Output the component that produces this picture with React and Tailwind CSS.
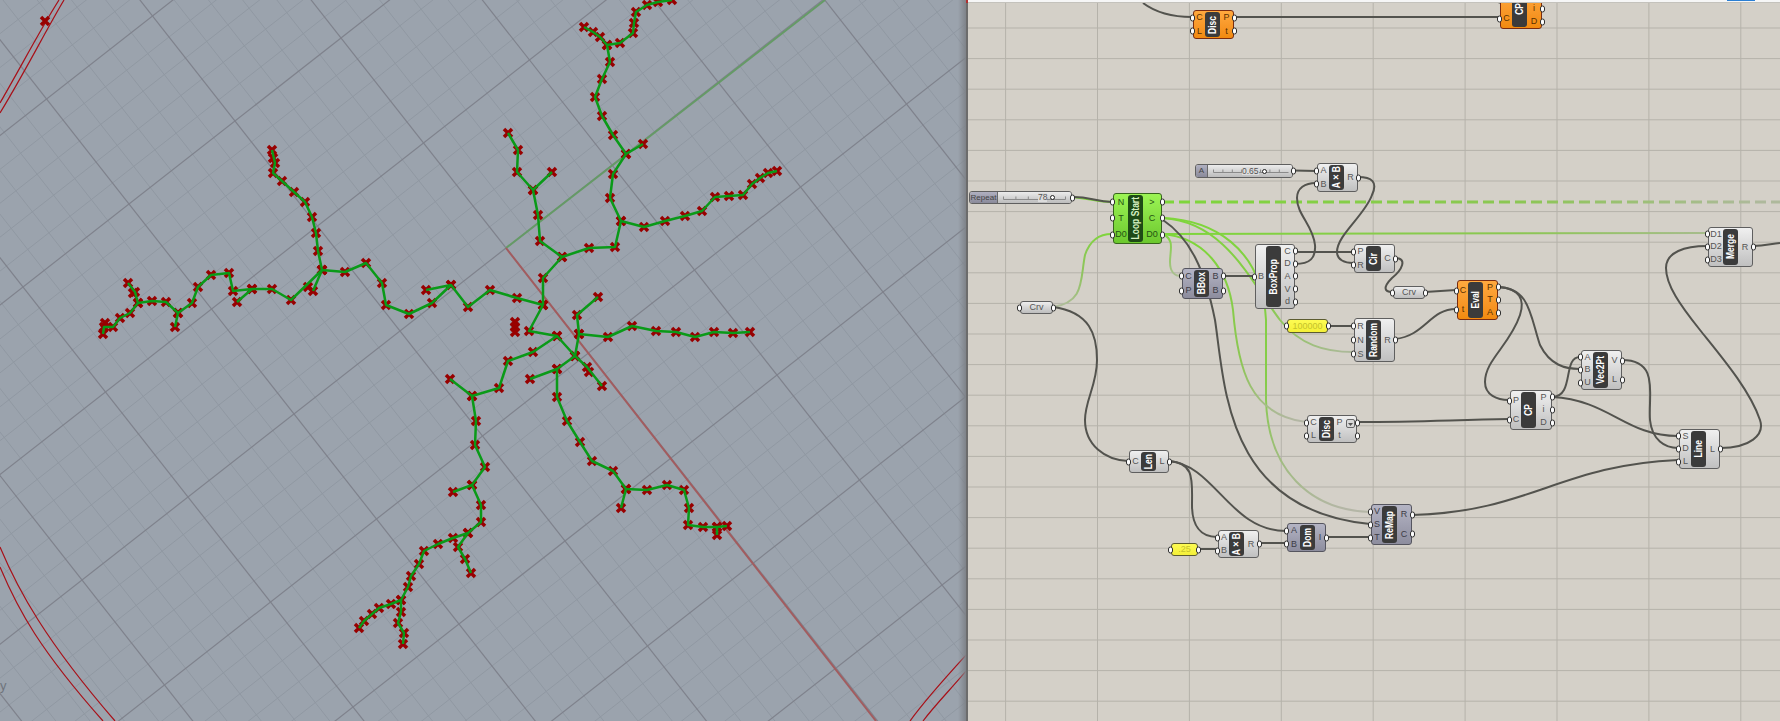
import React from "react";

const CANVAS_X = 968;

// --- Rhino viewport data ---
const O = [506, 248];
const U = [82.5, 105];
const V = [106, -83];
const pt = (a, b) => [O[0] + a * U[0] + b * V[0], O[1] + a * U[1] + b * V[1]];

const gridLines = [];
for (let i = -50; i <= 50; i++) {
	const k = i / 5;
	const major = i % 5 === 0;
	const a1 = pt(k, -12);
	const a2 = pt(k, 12);
	const b1 = pt(-12, k);
	const b2 = pt(12, k);
	gridLines.push({ d: `M${a1[0]} ${a1[1]}L${a2[0]} ${a2[1]}`, major });
	gridLines.push({ d: `M${b1[0]} ${b1[1]}L${b2[0]} ${b2[1]}`, major });
}

const curves = [
	// upper branch
	[[672, 0], [658, 2], [647, 5], [636, 12], [634, 23], [633, 33], [620, 43], [607, 45], [610, 62], [602, 79], [595, 97], [602, 116], [613, 135], [626, 154], [613, 174], [610, 198], [621, 221], [615, 247], [589, 248], [562, 257], [543, 278], [543, 305]],
	[[607, 45], [600, 37], [593, 32], [584, 27]],
	[[626, 154], [643, 144]],
	[[621, 221], [644, 227], [665, 221], [685, 216], [702, 211], [715, 197], [729, 196], [743, 195], [752, 184], [760, 178], [768, 173], [777, 171]],
	[[562, 257], [540, 241], [538, 215], [533, 190], [517, 172], [518, 150], [508, 133]],
	[[533, 190], [552, 172]],
	// left branch
	[[543, 305], [517, 298], [490, 290], [468, 307], [451, 285], [426, 290]],
	[[451, 285], [432, 303], [409, 314], [386, 305], [382, 283], [366, 263], [345, 272], [322, 270]],
	[[322, 270], [318, 251], [316, 233], [312, 217], [305, 202], [294, 192], [282, 181], [273, 173], [275, 163], [272, 150]],
	[[322, 270], [313, 291]],
	[[322, 270], [291, 300], [272, 289], [252, 289], [233, 291], [229, 273], [211, 275], [198, 287], [192, 303], [178, 313], [166, 302], [152, 301], [138, 303], [130, 313], [120, 318], [113, 327], [104, 327], [103, 334]],
	[[252, 289], [237, 302]],
	[[138, 303], [135, 292], [128, 283]],
	[[178, 313], [175, 327]],
	// centre and lower branches
	[[543, 305], [529, 331], [557, 336], [575, 356], [579, 334], [577, 315], [598, 297]],
	[[579, 334], [608, 337], [632, 326], [656, 331], [676, 332], [695, 337], [714, 332], [733, 333], [750, 332]],
	[[575, 356], [587, 367], [602, 386]],
	[[575, 356], [557, 369], [530, 379]],
	[[557, 369], [557, 397], [567, 421], [580, 442], [592, 461], [613, 471], [626, 489], [647, 490], [667, 485], [684, 490], [689, 508], [688, 525], [703, 527], [717, 527], [727, 526]],
	[[626, 489], [621, 508]],
	[[717, 527], [717, 535]],
	[[557, 336], [533, 352], [508, 361], [499, 388], [472, 396], [476, 421], [475, 445], [485, 467], [472, 485], [481, 505], [481, 522], [468, 533], [453, 538], [438, 544], [424, 551], [419, 564], [411, 576], [408, 587], [401, 600], [391, 604], [379, 608], [372, 614], [364, 621], [359, 628]],
	[[472, 396], [450, 379]],
	[[472, 485], [453, 492]],
	[[468, 533], [458, 547], [465, 559], [471, 573]],
	[[401, 600], [401, 612], [398, 623], [404, 633], [403, 644]],
];

const extraMarks = [[45, 21], [515, 322], [515, 327], [515, 332], [308, 287], [273, 158], [105, 323], [133, 293], [589, 372]];
const marks = [...extraMarks, ...curves.flat()];

// --- Grasshopper canvas data ---
const vLines = Array.from({ length: 9 }, (_, i) => 1005.6 + i * 91.9);
const hLines = Array.from({ length: 23 }, (_, i) => 28 + i * 30.6);

const darkWires = [
	"M1073 197C1090 197 1095 201 1112 202",
	"M1143 3C1155 12 1170 17 1192 17",
	"M1234 17L1499 17",
	"M1163 220C1190 238 1205 270 1215 320C1225 385 1225 510 1370 524",
	"M1053 307C1090 312 1097 335 1097 360C1097 385 1085 400 1085 420C1085 445 1105 460 1128 461",
	"M1223 276L1254 276",
	"M1295 252L1353 252",
	"M1295 264C1310 264 1316 258 1315 245C1313 225 1297 215 1297 198C1297 188 1305 183 1316 183",
	"M1358 177C1372 177 1378 182 1372 195C1365 215 1337 235 1337 252C1337 260 1345 263 1353 263",
	"M1294 170.5L1316 171",
	"M1395 258C1408 258 1402 270 1392 278C1382 288 1385 292 1392 292",
	"M1425 292L1456 290",
	"M1395 339C1425 336 1430 309 1456 309",
	"M1328 326L1353 326",
	"M1498 287C1530 288 1530 315 1540 345C1550 365 1565 369 1580 369",
	"M1498 287C1520 288 1525 300 1520 315C1510 345 1485 360 1485 382C1485 395 1497 400 1509 400",
	"M1357 422C1420 422 1450 420 1509 419",
	"M1552 397C1575 397 1562 357 1580 357",
	"M1552 397C1610 400 1625 436 1678 436",
	"M1622 360C1660 360 1648 395 1650 420C1652 440 1665 448 1678 448",
	"M1412 515C1530 512 1560 465 1678 460",
	"M1720 448C1750 448 1765 435 1760 420C1750 390 1720 355 1700 330C1680 305 1666 285 1666 268C1666 252 1685 246 1707 246",
	"M1753 246C1765 246 1770 244 1780 243",
	"M1169 461C1195 463 1192 480 1192 505C1192 525 1200 537 1217 537",
	"M1169 461C1215 465 1230 531 1286 531",
	"M1198 549L1217 549",
	"M1259 543L1286 543",
	"M1326 537L1370 537",
];

const nodes = [
	{ x: 1113, y: 193, w: 48, h: 50, left: 15, name: "Loop Start", tone: "green", ins: ["N", "T", "D0"], outs: [">", "C", "D0"] },
	{ x: 1317, y: 163, w: 40, h: 28, left: 12, name: "A×B", ins: ["A", "B"], outs: ["R"] },
	{ x: 1182, y: 268, w: 40, h: 30, left: 12, name: "BBox", tone: "lilac", ins: ["C", "P"], outs: ["B", "B"] },
	{ x: 1255, y: 244, w: 39, h: 64, left: 11, name: "BoxProp", ins: ["B"], outs: ["C", "D", "A", "V", "d"] },
	{ x: 1354, y: 244, w: 40, h: 28, left: 12, name: "Cir", ins: ["P", "R"], outs: ["C"] },
	{ x: 1354, y: 318, w: 40, h: 43, left: 12, name: "Random", ins: ["R", "N", "S"], outs: ["R"] },
	{ x: 1457, y: 280, w: 40, h: 39, left: 11, name: "Eval", tone: "orange", ins: ["C", "t"], outs: ["P", "T", "A"] },
	{ x: 1581, y: 350, w: 40, h: 39, left: 12, name: "Vec2Pt", ins: ["A", "B", "U"], outs: ["V", "L"] },
	{ x: 1510, y: 390, w: 41, h: 39, left: 11, name: "CP", ins: ["P", "C"], outs: ["P", "i", "D"] },
	{ x: 1679, y: 429, w: 40, h: 39, left: 12, name: "Line", ins: ["S", "D", "L"], outs: ["L"] },
	{ x: 1708, y: 227, w: 44, h: 39, left: 15, name: "Merge", ins: ["D1", "D2", "D3"], outs: ["R"] },
	{ x: 1307, y: 415, w: 49, h: 27, left: 12, name: "Disc", ins: ["C", "L"], outs: ["P", "t"], icon: true },
	{ x: 1129, y: 450, w: 39, h: 22, left: 12, name: "Len", ins: ["C"], outs: ["L"] },
	{ x: 1218, y: 530, w: 40, h: 27, left: 11, name: "A×B", ins: ["A", "B"], outs: ["R"] },
	{ x: 1287, y: 523, w: 38, h: 28, left: 13, name: "Dom", tone: "lilac", ins: ["A", "B"], outs: ["I"] },
	{ x: 1371, y: 504, w: 40, h: 40, left: 11, name: "ReMap", tone: "lilac", ins: ["V", "S", "T"], outs: ["R", "C"] },
	{ x: 1193, y: 10, w: 40, h: 28, left: 12, name: "Disc", tone: "orange", ins: ["C", "L"], outs: ["P", "t"] },
	{ x: 1500, y: -11, w: 41, h: 39, left: 12, name: "CP", tone: "orange", ins: ["", "C"], outs: ["", "i", "D"] },
];

const params = [
	{ x: 1020, y: 301, w: 32, h: 12, label: "Crv" },
	{ x: 1393, y: 286, w: 31, h: 12, label: "Crv" },
	{ x: 1287, y: 319, w: 40, h: 13, label: "100000", yellow: true },
	{ x: 1171, y: 543, w: 26, h: 12, label: ".25", yellow: true },
];

const tones = {
	grey: { body: "from-[#f0f0f0] to-[#c0c0c0] border-[#5f5f5f]", bar: "bg-[#3b3b3b] text-white", text: "text-[#555]" },
	lilac: { body: "from-[#b4b4c4] to-[#8d8d9e] border-[#55555f]", bar: "bg-[#3b3b3b] text-white", text: "text-[#3c3c46]" },
	green: { body: "from-[#9cf454] to-[#6cc82e] border-[#37661c]", bar: "bg-[#1e4a16] text-[#d5f0c0]", text: "text-[#245212]" },
	orange: { body: "from-[#ffa93e] to-[#f28a0e] border-[#7a2c10]", bar: "bg-[#3b3b3b] text-white", text: "text-[#5a3000]" },
};

const Grip = ({ side }) => (
	<span
		className={`absolute top-1/2 -translate-y-1/2 w-[5px] h-[7px] rounded-full bg-white border border-[#2f2f2f] ${side === "left" ? "-left-[4px]" : "-right-[4px]"}`}
	/>
);

const PortColumn = ({ ports, side, className, style, text, labelClass }) => (
	<div className={`flex flex-col justify-around ${className}`} style={style}>
		{ports.map((p, i) => (
			<div key={i} className={`relative h-3 flex items-center justify-center text-[9px] leading-none ${text}`}>
				<span className={labelClass}>{p}</span>
				<Grip side={side} />
			</div>
		))}
	</div>
);

const Node = ({ n }) => {
	const tone = tones[n.tone || "grey"];
	return (
		<div
			className={`absolute flex rounded-[3px] border bg-linear-to-b ${tone.body}`}
			style={{ left: n.x - CANVAS_X, top: n.y, width: n.w + 1, height: n.h + 1 }}
		>
			<PortColumn ports={n.ins} side="left" text={tone.text} style={{ width: n.left - 1 }} className="shrink-0" />
			<div className={`w-[15px] shrink-0 my-px rounded-[3px] flex items-center justify-center overflow-hidden font-bold ${tone.bar}`}>
				<span className="[writing-mode:vertical-rl] rotate-180 scale-x-125 text-[8.5px] leading-none whitespace-nowrap">{n.name}</span>
			</div>
			<div className="relative flex-1 min-w-0 flex">
				<PortColumn ports={n.outs} side="right" text={tone.text} labelClass={n.icon ? "mr-[11px]" : ""} className="flex-1 min-w-0" />
				{n.icon && (
					<svg className="absolute right-px top-[3px]" width="9" height="9" viewBox="0 0 9 9">
						<rect x="0.5" y="0.5" width="8" height="8" rx="1.5" fill="#d8d8d8" stroke="#666" />
						<path d="M2 4L7 4L4.5 7Z" fill="#555" />
					</svg>
				)}
			</div>
		</div>
	);
};

const Param = ({ p }) => (
	<div
		className={`absolute flex items-center justify-center rounded-[3px] border text-[9px] leading-none bg-linear-to-b ${p.yellow ? "from-[#fdfb52] to-[#f4f038] border-[#5c5c30] text-[#c6c32c]" : "from-[#eeeeee] to-[#bdbdbd] border-[#5f5f5f] text-[#555]"}`}
		style={{ left: p.x - CANVAS_X, top: p.y, width: p.w + 1, height: p.h + 1 }}
	>
		{p.label}
		<Grip side="left" />
		<Grip side="right" />
	</div>
);

const Slider = ({ s }) => (
	<div
		className="absolute flex rounded-[3px] border border-[#5f5f5f] text-[8px] leading-none text-[#444]"
		style={{ left: s.x - CANVAS_X, top: s.y, width: s.w, height: s.h }}
	>
		<div
			className="shrink-0 flex items-center justify-center rounded-l-[2px] border-r border-[#6a6a6a] bg-linear-to-b from-[#b0b0c0] to-[#8a8a9a]"
			style={{ width: s.labelW }}
		>
			{s.label}
		</div>
		<div className="relative flex-1 rounded-r-[2px] bg-linear-to-b from-[#ececec] to-[#bcbcbc]">
			<svg className="absolute inset-0 w-full h-full" preserveAspectRatio="none">
				<path d={s.track} stroke="#8a8a8a" fill="none" />
			</svg>
			<div className="relative h-full flex items-center gap-[3px]" style={{ paddingLeft: s.valueX }}>
				<span className="bg-[#dcdcdc] text-[#555] text-[8.5px]">{s.value}</span>
				<span className="w-[5px] h-[5px] rounded-full bg-white border border-[#222]" />
			</div>
		</div>
		<Grip side="right" />
	</div>
);

const ticks = (from, to, step, y) => {
	let d = `M${from} ${y}L${to} ${y}`;
	for (let x = from; x <= to; x += step) d += `M${x} ${y - 3}L${x} ${y}`;
	return d;
};

const sliders = [
	{ x: 969, y: 191, w: 103, h: 13, label: "Repeat", labelW: 28, value: "78", valueX: 40, track: ticks(5.5, 67.5, 12.4, 7.5) },
	{ x: 1195, y: 164, w: 98, h: 14, label: "A", labelW: 12, value: "0.65", valueX: 34, track: ticks(5.5, 80.5, 9.4, 7.5) },
];

const App = () => {
	return (
		<div className="flex w-[1780px] h-[721px] overflow-hidden font-['Liberation_Sans',Arial,sans-serif]">
			{/* Rhino viewport */}
			<div className="relative w-[966px] shrink-0 h-full bg-[#9ba3ad] overflow-hidden">
				<svg className="absolute inset-0" width="966" height="721" viewBox="0 0 966 721">
					{gridLines.filter((l) => !l.major).map((l, i) => (
						<path key={i} d={l.d} stroke="#9098a2" strokeWidth="1" fill="none" />
					))}
					{gridLines.filter((l) => l.major).map((l, i) => (
						<path key={i} d={l.d} stroke="#7f828c" strokeWidth="1.2" fill="none" />
					))}
					<path d="M506 248L825 0" stroke="#659a66" strokeWidth="2" fill="none" />
					<path d="M506 248L876 721" stroke="#a25c5f" strokeWidth="2" fill="none" />
					<g stroke="#a81018" strokeWidth="1.2" fill="none">
						<path d="M59 0C40 30 22 65 0 103" />
						<path d="M64 0C45 32 25 72 0 113" />
						<path d="M0 547C18 590 45 640 115 721" />
						<path d="M0 567C18 610 40 650 103 721" />
						<path d="M967 654C945 678 925 700 910 721" />
						<path d="M967 670C950 690 935 705 923 721" />
					</g>
					{marks.map(([x, y], i) => (
						<path
							key={i}
							d={`M${x - 4} ${y - 4}L${x + 4} ${y + 4}M${x - 4} ${y + 4}L${x + 4} ${y - 4}`}
							stroke="#980000"
							strokeWidth="3.5"
							fill="none"
						/>
					))}
					{curves.map((c, i) => (
						<polyline key={i} points={c.map((p) => p.join(",")).join(" ")} stroke="#0a9a18" strokeWidth="2.5" strokeLinejoin="round" fill="none" />
					))}
				</svg>
				<span className="absolute left-0 top-[679px] text-[13px] leading-none text-[#6f747c]">y</span>
				{/* shadow at the splitter */}
				<div className="absolute right-0 top-0 w-2 h-full bg-linear-to-r from-transparent to-[#7f8389]" />
			</div>

			{/* splitter */}
			<div className="w-[2px] shrink-0 h-full bg-[#6c6c6c]">
				<div className="h-[3px] bg-[#b03030]" />
			</div>

			{/* Grasshopper canvas */}
			<div className="relative flex-1 h-full bg-[#d4d0c8] overflow-hidden">
				<svg className="absolute inset-0" width="812" height="721" viewBox="968 0 812 721">
					<defs>
						<linearGradient id="fadeRight" gradientUnits="userSpaceOnUse" x1="1163" y1="0" x2="1760" y2="0">
							<stop offset="0" stopColor="#7ed63a" />
							<stop offset="0.6" stopColor="#8cc654" />
							<stop offset="1" stopColor="#aeb99c" />
						</linearGradient>
						<linearGradient id="fadeCrv" gradientUnits="userSpaceOnUse" x1="1112" y1="234" x2="1053" y2="307">
							<stop offset="0" stopColor="#7ed63a" />
							<stop offset="0.5" stopColor="#8ec45c" />
							<stop offset="1" stopColor="#b4bba4" />
						</linearGradient>
						<linearGradient id="fadeDown" gradientUnits="userSpaceOnUse" x1="1180" y1="218" x2="1340" y2="512">
							<stop offset="0" stopColor="#7ed63a" />
							<stop offset="0.55" stopColor="#86cc4a" />
							<stop offset="0.8" stopColor="#a2bb84" />
							<stop offset="1" stopColor="#b4b6a6" />
						</linearGradient>
						<linearGradient id="fadeDisc" gradientUnits="userSpaceOnUse" x1="1200" y1="240" x2="1300" y2="422">
							<stop offset="0" stopColor="#7ed63a" />
							<stop offset="0.6" stopColor="#8cc654" />
							<stop offset="1" stopColor="#b4b6a6" />
						</linearGradient>
						<linearGradient id="fadeRandom" gradientUnits="userSpaceOnUse" x1="1163" y1="218" x2="1353" y2="352">
							<stop offset="0" stopColor="#7ed63a" />
							<stop offset="0.55" stopColor="#86cc4a" />
							<stop offset="1" stopColor="#adb89c" />
						</linearGradient>
						<linearGradient id="fadeBox" gradientUnits="userSpaceOnUse" x1="1163" y1="234" x2="1181" y2="276">
							<stop offset="0" stopColor="#7ed63a" />
							<stop offset="1" stopColor="#adbd96" />
						</linearGradient>
					</defs>
					{hLines.map((y) => (
						<path key={y} d={`M968 ${y}L1780 ${y}`} stroke="#b5b2aa" fill="none" />
					))}
					{vLines.map((x) => (
						<path key={x} d={`M${x} 0L${x} 721`} stroke="#b5b2aa" fill="none" />
					))}
					<g fill="none" strokeWidth="2">
						<path d="M1073 197C1092 199 1098 202 1112 202" stroke="#7ed63a" />
						<path d="M1163 202L1780 202" stroke="url(#fadeRight)" strokeWidth="3" strokeDasharray="11 5" />
						<path d="M1163 234L1707 233" stroke="url(#fadeRight)" />
						<path d="M1053 307C1085 302 1080 280 1085 255C1090 240 1100 234 1112 234" stroke="url(#fadeCrv)" />
						<path d="M1163 218C1210 220 1262 245 1266 320L1266 400C1268 470 1310 510 1370 512" stroke="url(#fadeDown)" />
						<path d="M1163 218C1225 222 1250 280 1280 320C1300 345 1325 352 1353 352" stroke="url(#fadeRandom)" />
						<path d="M1163 234C1205 238 1228 270 1233 310C1238 370 1250 415 1306 422" stroke="url(#fadeDisc)" />
						<path d="M1163 234C1175 240 1170 250 1170 262C1170 272 1175 276 1181 276" stroke="url(#fadeBox)" />
						{darkWires.map((d, i) => (
							<path key={i} d={d} stroke="#53534e" />
						))}
					</g>
				</svg>
				{sliders.map((s) => (
					<Slider key={s.label} s={s} />
				))}
				{params.map((p) => (
					<Param key={p.x} p={p} />
				))}
				{nodes.map((n) => (
					<Node key={n.x} n={n} />
				))}
				{/* window edge above the canvas */}
				<div className="absolute top-0 left-0 w-full h-[3px] bg-[#f6f6f6] border-b border-[#c4c2bc]">
					<div className="ml-[759px] w-[28px] h-px bg-[#2a7fd4]" />
				</div>
			</div>
		</div>
	);
};

export default App;
